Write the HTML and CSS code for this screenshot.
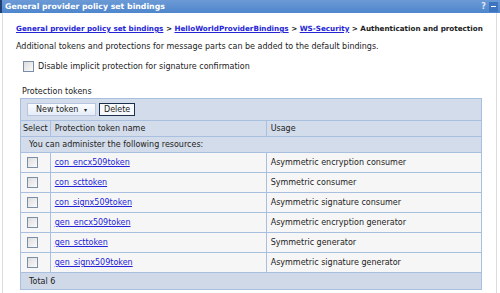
FILE: index.html
```html
<!DOCTYPE html>
<html lang="en">

<head>
  <meta charset="UTF-8">
  <title>General provider policy set bindings</title>
  <link rel="stylesheet" href="styles.css">
</head>

<body>
  <div class="portlet">
    <div class="titlebar">
      <span class="title">General provider policy set bindings</span>
      <span class="title-icons">
        <span class="help">?</span>
        <span class="minimize"></span>
      </span>
    </div>

    <div class="content">
      <p class="breadcrumb">
        <a href="#">General provider policy set bindings</a> &gt;
        <a href="#">HelloWorldProviderBindings</a> &gt;
        <a href="#">WS-Security</a> &gt;
        Authentication and protection
      </p>
      <p class="description">Additional tokens and protections for message parts can be added to the default bindings.</p>

      <label class="option">
        <span class="checkbox"></span>
        Disable implicit protection for signature confirmation
      </label>

      <div class="section-title">Protection tokens</div>
      <div class="collection">
        <div class="toolbar">
          <button class="btn-menu">New token <span class="caret">&#9662;</span></button>
          <button class="btn-delete">Delete</button>
        </div>
        <table>
          <thead>
            <tr>
              <th class="col-select">Select</th>
              <th class="col-name">Protection token name</th>
              <th>Usage</th>
            </tr>
          </thead>
          <tbody>
            <tr class="info-row">
              <td colspan="3">You can administer the following resources:</td>
            </tr>
            <tr>
              <td class="col-select"><span class="checkbox"></span></td>
              <td><a href="#">con_encx509token</a></td>
              <td>Asymmetric encryption consumer</td>
            </tr>
            <tr>
              <td class="col-select"><span class="checkbox"></span></td>
              <td><a href="#">con_scttoken</a></td>
              <td>Symmetric consumer</td>
            </tr>
            <tr>
              <td class="col-select"><span class="checkbox"></span></td>
              <td><a href="#">con_signx509token</a></td>
              <td>Asymmetric signature consumer</td>
            </tr>
            <tr>
              <td class="col-select"><span class="checkbox"></span></td>
              <td><a href="#">gen_encx509token</a></td>
              <td>Asymmetric encryption generator</td>
            </tr>
            <tr>
              <td class="col-select"><span class="checkbox"></span></td>
              <td><a href="#">gen_scttoken</a></td>
              <td>Symmetric generator</td>
            </tr>
            <tr>
              <td class="col-select"><span class="checkbox"></span></td>
              <td><a href="#">gen_signx509token</a></td>
              <td>Asymmetric signature generator</td>
            </tr>
          </tbody>
          <tfoot>
            <tr>
              <td colspan="3">Total 6</td>
            </tr>
          </tfoot>
        </table>
      </div>
    </div>
  </div>
</body>

</html>
```

FILE: styles.css
```css
body {
  margin: 0;
  font-family: "DejaVu Sans", Verdana, sans-serif;
  font-size: 8px;
  color: #222;
  background-color: #fff;
}

.portlet {
  width: 500px;
  height: 293px;
  box-sizing: border-box;
}

.titlebar {
  display: flex;
  justify-content: space-between;
  align-items: center;
  height: 13px;
  padding: 0 2px 0 3px;
  background: linear-gradient(#6c9ad6, #4f86cc);
  border-left: 2px solid #1f3f73;
  color: #fff;
}

.title {
  font-weight: bold;
  font-size: 7.8px;
}

.title-icons {
  display: flex;
  align-items: center;
  gap: 3px;
}

.help {
  font-weight: bold;
  color: #dfe9f7;
}

.minimize {
  display: block;
  width: 9px;
  height: 10px;
  background: #3d74c0 linear-gradient(#fff, #fff) center / 5px 1px no-repeat;
}

.content {
  margin: 0 3px 0 2px;
  padding: 10px 0 0 13px;
  border-left: 1px solid #ddd;
  border-right: 1px solid #ddd;
  height: 280px;
  box-sizing: border-box;
}

a {
  color: #2424d6;
}

.breadcrumb {
  margin: 0;
  font-weight: bold;
  font-size: 7.2px;
  line-height: 11px;
  white-space: nowrap;
}

.description {
  margin: 7px 0 0;
  line-height: 11px;
}

.option {
  display: flex;
  align-items: center;
  gap: 4px;
  margin: 9px 0 0 7px;
}

.checkbox {
  display: inline-block;
  width: 9px;
  height: 9px;
  border: 1px solid #7a8ea8;
  background: linear-gradient(135deg, #dcdcdc, #fbfbfb);
}

.section-title {
  margin: 15px 0 0 6px;
}

.collection {
  margin: 2px 14px 0 4px;
  border: 1px solid #a9bfe0;
}

.toolbar {
  display: flex;
  gap: 3px;
  padding: 4px 6px 4px;
  background-color: #d3dcea;
  border-bottom: 1px solid #a9bfe0;
}

.toolbar button {
  font-family: inherit;
  font-size: 8px;
  height: 13px;
  padding: 0 4px;
  color: #222;
}

.btn-menu {
  width: 69px;
  background: linear-gradient(#fafcff, #e6edf7);
  border: 1px solid #b7c6de;
}

.caret {
  font-size: 6px;
  margin-left: 3px;
}

.btn-delete {
  background-color: #f6f8fb;
  border: 1px solid #1c2f4c;
}

table {
  width: 100%;
  border-collapse: collapse;
}

th,
td {
  border: 1px solid #a9bfe0;
  text-align: left;
  padding: 0 4px;
}

th {
  height: 15px;
  font-weight: normal;
  background-color: #d3dcea;
  border-top: none;
}

th:first-child,
td:first-child {
  border-left: none;
}

th:last-child,
td:last-child {
  border-right: none;
}

th.col-select {
  width: 23px;
  padding: 0 2px;
}

td.col-select {
  width: 21px;
  padding: 0 0 0 6px;
}

.col-name {
  width: 207px;
}

.info-row td {
  height: 15px;
  padding-left: 8px;
  background-color: #d3dcea;
}

tbody td {
  height: 19px;
  background-color: #f6f6f6;
}

tbody td .checkbox {
  vertical-align: middle;
}

tfoot td {
  height: 16px;
  padding-left: 8px;
  background-color: #d0d9e8;
  border-bottom: none;
}
```
